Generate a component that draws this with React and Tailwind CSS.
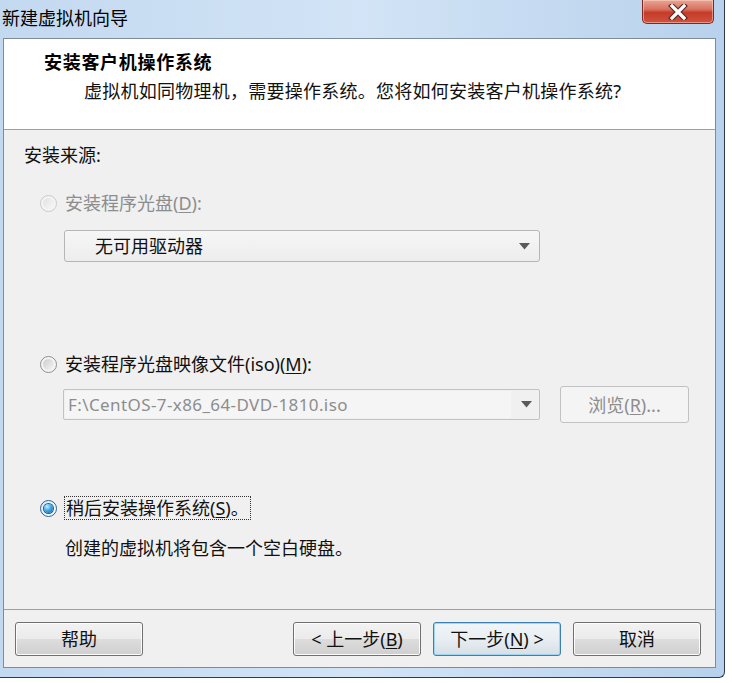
import React from "react";

function Radio({ checked = false, disabled = false }) {
  if (checked) {
    return (
      <span className="inline-flex w-[17px] h-[17px] shrink-0 items-center justify-center rounded-full border border-[#2c628b] bg-gradient-to-br from-[#d6ecfb] to-[#ffffff]">
        <span className="w-[9px] h-[9px] rounded-full bg-[radial-gradient(circle_at_35%_30%,#c9f0ff_0%,#3fa6e6_45%,#0f5fa3_100%)] shadow-[0_0_0_1px_#1b5d92]" />
      </span>
    );
  }
  if (disabled) {
    return (
      <span className="inline-flex w-[17px] h-[17px] shrink-0 items-center justify-center rounded-full border border-[#c9c9c9] bg-[#f4f4f4]">
        <span className="w-[11px] h-[11px] rounded-full bg-gradient-to-br from-[#e2e2e2] to-[#f7f7f7]" />
      </span>
    );
  }
  return (
    <span className="inline-flex w-[17px] h-[17px] shrink-0 items-center justify-center rounded-full border border-[#8e8f8f] bg-[#f4f4f4]">
      <span className="w-[11px] h-[11px] rounded-full bg-gradient-to-br from-[#cbcbcb] to-[#f7f7f7]" />
    </span>
  );
}

function Arrow() {
  return (
    <svg width="11" height="7" viewBox="0 0 11 7">
      <polygon points="0,0 11,0 5.5,6.5" fill="#5a5a5a" />
    </svg>
  );
}

function FooterButton({ children, focused = false }) {
  return (
    <button
      className={
        focused
          ? "w-[128px] h-[34px] rounded-[3px] border border-[#3c7fb1] bg-gradient-to-b from-[#f0f5f9] via-[#e8eef3] to-[#d6dfe6] shadow-[inset_0_0_0_1px_#9ed6f3] text-[18px] leading-[24px] text-[#111] flex items-center justify-center whitespace-nowrap"
          : "w-[128px] h-[34px] rounded-[3px] border border-[#707070] bg-[linear-gradient(#f2f2f2_0%,#ebebeb_50%,#dddddd_50%,#cfcfcf_100%)] shadow-[inset_0_0_0_1px_#fcfcfc] text-[18px] leading-[24px] text-[#111] flex items-center justify-center whitespace-nowrap"
      }
    >
      {children}
    </button>
  );
}

export default function App() {
  return (
    <div className="w-[732px] h-[683px] bg-white overflow-hidden font-['Noto_Sans','Noto_Sans_CJK_SC',sans-serif] text-[#111]">
      <div className="w-[725px] h-[678px] flex flex-col border-r border-b border-[#2f3b47] rounded-br-[6px] bg-gradient-to-r from-[#c3d9f0] via-[#d2e4f6] to-[#b8d1ec]">
        {/* Title bar */}
        <div className="h-[38px] flex items-start justify-between shrink-0">
          <div className="pl-[2px] mt-[6px] text-[18px] leading-[24px] text-[#000]">新建虚拟机向导</div>
          <div className="mr-[10px] w-[72px] h-[24px] rounded-b-[5px] border border-t-0 border-[#7a2a22] bg-[linear-gradient(#e9a594_0%,#d7735f_40%,#c63a29_55%,#d0533f_100%)] shadow-[inset_0_0_0_1px_rgba(255,220,210,0.5)] flex items-center justify-center">
            <svg width="20" height="16" viewBox="0 0 20 16">
              <path d="M4 2 L16 14 M16 2 L4 14" stroke="#5a2a24" strokeWidth="5.5" strokeLinecap="square" />
              <path d="M4 2 L16 14 M16 2 L4 14" stroke="#ffffff" strokeWidth="3.2" strokeLinecap="square" />
            </svg>
          </div>
        </div>

        {/* Client area */}
        <div className="ml-[3px] mr-[8px] h-[630px] flex flex-col border border-[#7d8c9c] bg-[#f0f0f0]">
          {/* Header */}
          <div className="h-[91px] shrink-0 bg-white border-b border-[#a0a0a0] pt-[10px] pl-[40px]">
            <div className="text-[18px] leading-[26px] font-bold tracking-[0.7px] text-[#000]">安装客户机操作系统</div>
            <div className="mt-[4px] ml-[40px] text-[18px] leading-[24px] tracking-[0.25px] text-[#111] whitespace-nowrap">
              虚拟机如同物理机，需要操作系统。您将如何安装客户机操作系统?
            </div>
          </div>

          {/* Body */}
          <div className="h-[479px] shrink-0 pt-[13px] pl-[20px] text-[18px] leading-[24px]">
            <div>安装来源:</div>

            <div className="mt-[24px] ml-[16px] flex items-center gap-[8px] text-[#8d8d8d]">
              <Radio disabled />
              <span>
                安装程序光盘(<span className="underline underline-offset-2">D</span>):
              </span>
            </div>

            <div className="mt-[15px] ml-[40px] w-[476px] h-[32px] rounded-[3px] border border-[#b5b5b5] bg-gradient-to-b from-[#f6f6f6] to-[#ededed] flex items-center justify-between pl-[30px] pr-[9px]">
              <span className="text-[#111]">无可用驱动器</span>
              <Arrow />
            </div>

            <div className="mt-[90px] ml-[16px] flex items-center gap-[8px]">
              <Radio />
              <span>
                安装程序光盘映像文件(iso)(<span className="underline underline-offset-2">M</span>):
              </span>
            </div>

            <div className="mt-[10px] ml-[39px] flex items-center gap-[20px]">
              <div className="w-[477px] h-[31px] rounded-[2px] border border-[#c2c2c2] bg-[#f0f0f0] flex items-center">
                <div className="ml-[1px] w-[446px] h-[27px] bg-[#f5f5f5] pl-[3px] flex items-center text-[17px] text-[#8d8d8d] tracking-[0.4px]">
                  F:\CentOS-7-x86_64-DVD-1810.iso
                </div>
                <div className="flex-1 flex items-center justify-center pl-[2px]">
                  <Arrow />
                </div>
              </div>
              <div className="w-[129px] h-[37px] rounded-[3px] border border-[#c2c2c2] bg-[#f4f4f4] flex items-center justify-center text-[#8d8d8d]">
                <span>
                  浏览(<span className="underline underline-offset-2">R</span>)...
                </span>
              </div>
            </div>

            <div className="mt-[73px] ml-[16px] flex items-center gap-[7px]">
              <Radio checked />
              <span className="border border-dotted border-[#333] px-[1px] leading-[22px] whitespace-nowrap">
                稍后安装操作系统(<span className="underline underline-offset-2">S</span>)。
              </span>
            </div>

            <div className="mt-[16px] ml-[41px] whitespace-nowrap">创建的虚拟机将包含一个空白硬盘。</div>
          </div>

          {/* Footer */}
          <div className="flex-1 border-t border-[#a0a0a0] pt-[12px] pl-[11px] pr-[14px] flex items-start justify-between">
            <FooterButton>帮助</FooterButton>
            <div className="flex gap-[12px]">
              <FooterButton>
                &lt; 上一步(<span className="underline underline-offset-2">B</span>)
              </FooterButton>
              <FooterButton focused>
                下一步(<span className="underline underline-offset-2">N</span>) &gt;
              </FooterButton>
              <FooterButton>取消</FooterButton>
            </div>
          </div>
        </div>
      </div>
    </div>
  );
}
